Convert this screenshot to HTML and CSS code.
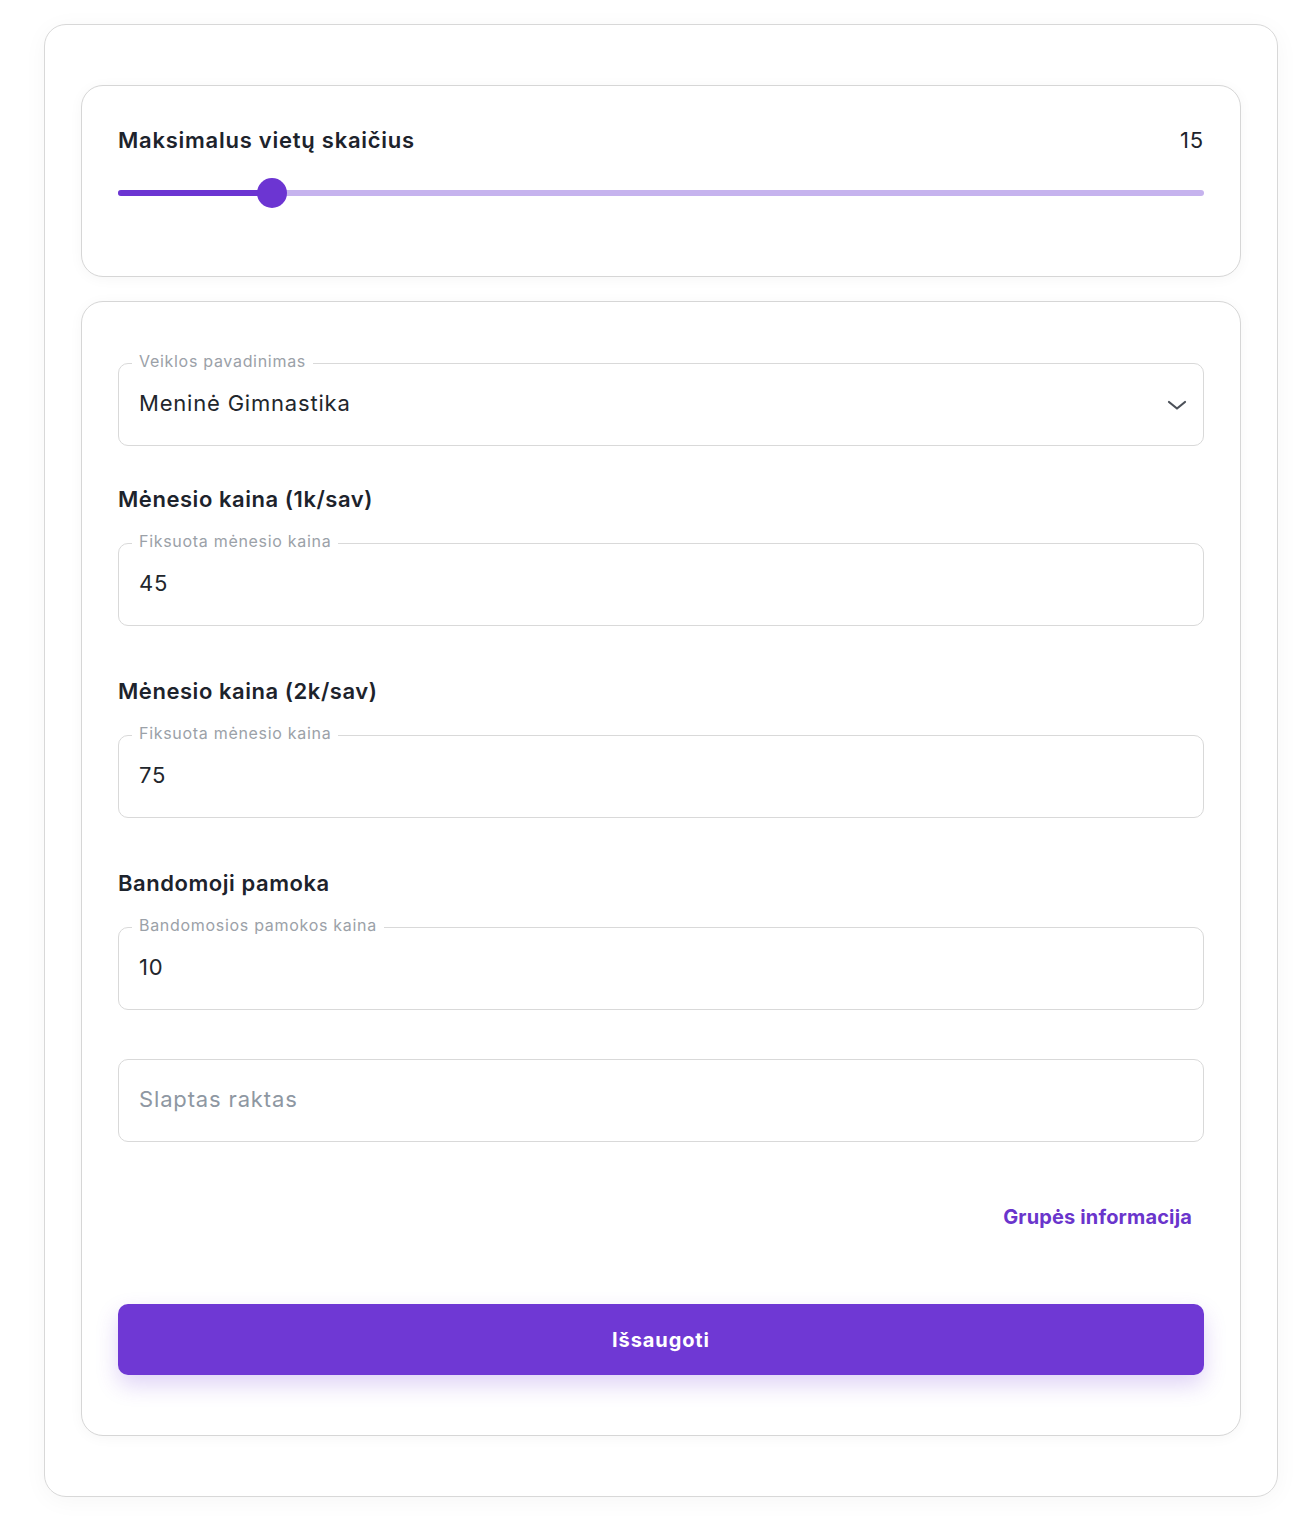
FILE: index.html
```html
<!DOCTYPE html>
<html lang="lt">
<head>
    <meta charset="UTF-8">
    <meta name="viewport" content="width=device-width, initial-scale=1.0">
    <title>Grupės nustatymai</title>
    <link rel="stylesheet" href="styles.css">
</head>
<body>
    <div class="page">
        <div class="panel">
            <div class="card seats-card">
                <div class="seats-head">
                    <h3>Maksimalus vietų skaičius</h3>
                    <span class="seats-value">15</span>
                </div>
                <div class="slider">
                    <div class="slider-rail"></div>
                    <div class="slider-fill" style="width: 14.2%"></div>
                    <div class="slider-thumb" style="left: 14.2%"></div>
                </div>
            </div>

            <div class="card form-card">
                <div class="field field-first">
                    <span class="field-label">Veiklos pavadinimas</span>
                    <span class="field-value">Meninė Gimnastika</span>
                    <svg class="chevron" width="22" height="12" viewBox="0 0 22 12">
                        <path d="M3 3 L11 9.5 L19 3" fill="none" stroke="#4b5058" stroke-width="2.2" stroke-linecap="round" stroke-linejoin="round"/>
                    </svg>
                </div>

                <h4 class="section-title first">Mėnesio kaina (1k/sav)</h4>
                <div class="field">
                    <span class="field-label">Fiksuota mėnesio kaina</span>
                    <span class="field-value">45</span>
                </div>

                <h4 class="section-title">Mėnesio kaina (2k/sav)</h4>
                <div class="field">
                    <span class="field-label">Fiksuota mėnesio kaina</span>
                    <span class="field-value">75</span>
                </div>

                <h4 class="section-title">Bandomoji pamoka</h4>
                <div class="field">
                    <span class="field-label">Bandomosios pamokos kaina</span>
                    <span class="field-value">10</span>
                </div>

                <div class="field field-secret">
                    <span class="field-placeholder">Slaptas raktas</span>
                </div>

                <div class="link-row">
                    <a href="#" class="group-link">Grupės informacija</a>
                </div>

                <button class="save-btn">Išsaugoti</button>
            </div>
        </div>
    </div>
</body>
</html>
```

FILE: styles.css
```css
body {
    margin: 0;
    padding: 0;
    background-color: #ffffff;
    font-family: Inter, "Noto Sans", Arial, sans-serif;
    color: #1d232c;
}
.page {
    padding: 24px 30px 30px 44px;
}
.panel {
    border: 1px solid #d8d8d8;
    border-radius: 22px;
    padding: 60px 36px 60px 36px;
    box-shadow: 0 4px 24px rgba(0, 0, 0, 0.04);
    display: flex;
    flex-direction: column;
    gap: 24px;
}
.card {
    border: 1px solid #d6d6d6;
    border-radius: 22px;
    background-color: #fff;
    box-shadow: 0 2px 14px rgba(0, 0, 0, 0.04);
}
.seats-card {
    padding: 39px 36px 68px 36px;
}
.seats-head {
    display: flex;
    justify-content: space-between;
    align-items: center;
    height: 30px;
}
.seats-head h3 {
    margin: 0;
    font-size: 22px;
    font-weight: 600;
    line-height: 30px;
    letter-spacing: 0.75px;
}
.seats-value {
    font-size: 22px;
    line-height: 30px;
    letter-spacing: 0.8px;
    color: #1d232c;
}
.slider {
    position: relative;
    height: 30px;
    margin-top: 23px;
}
.slider-rail {
    position: absolute;
    left: 0;
    right: 0;
    top: 12px;
    height: 6px;
    border-radius: 3px;
    background-color: #c6b3ee;
}
.slider-fill {
    position: absolute;
    left: 0;
    top: 12px;
    height: 6px;
    border-radius: 3px;
    background-color: #6c35d2;
}
.slider-thumb {
    position: absolute;
    top: 0;
    width: 30px;
    height: 30px;
    margin-left: -15px;
    border-radius: 50%;
    background-color: #6c35d2;
}
.form-card {
    padding: 36px 36px 60px 36px;
}
.field {
    position: relative;
    box-sizing: border-box;
    height: 83px;
    border: 1px solid #d9d9d9;
    border-radius: 10px;
    display: flex;
    align-items: center;
    padding: 0 20px 3px 20px;
}
.field-first {
    margin-top: 25px;
}
.field-label {
    position: absolute;
    top: -14px;
    left: 13px;
    padding: 0 7px;
    background-color: #fff;
    font-size: 16px;
    line-height: 22px;
    color: #9ba1a8;
    letter-spacing: 0.7px;
}
.field-value {
    font-size: 22px;
    letter-spacing: 0.8px;
    color: #22262c;
}
.field-placeholder {
    font-size: 22px;
    letter-spacing: 0.85px;
    color: #8e97a2;
}
.chevron {
    position: absolute;
    right: 15px;
    top: 35px;
}
.section-title {
    margin: 50px 0 29px 0;
    font-size: 22px;
    font-weight: 600;
    line-height: 30px;
    letter-spacing: 0.55px;
    color: #1d232c;
}
.section-title.first {
    margin-top: 38px;
}
.field-secret {
    margin-top: 49px;
}
.link-row {
    display: flex;
    justify-content: flex-end;
    margin-top: 61px;
    padding-right: 12px;
}
.group-link {
    font-size: 20px;
    font-weight: 700;
    line-height: 28px;
    letter-spacing: 0.15px;
    color: #6a35cc;
    text-decoration: none;
}
.save-btn {
    display: block;
    width: 100%;
    height: 71px;
    margin-top: 73px;
    border: none;
    border-radius: 10px;
    background-color: #6f38d4;
    color: #fff;
    font-family: Inter, "Noto Sans", Arial, sans-serif;
    font-size: 20px;
    font-weight: 700;
    letter-spacing: 0.9px;
    box-shadow: 0 10px 22px rgba(111, 56, 212, 0.22);
}
```
